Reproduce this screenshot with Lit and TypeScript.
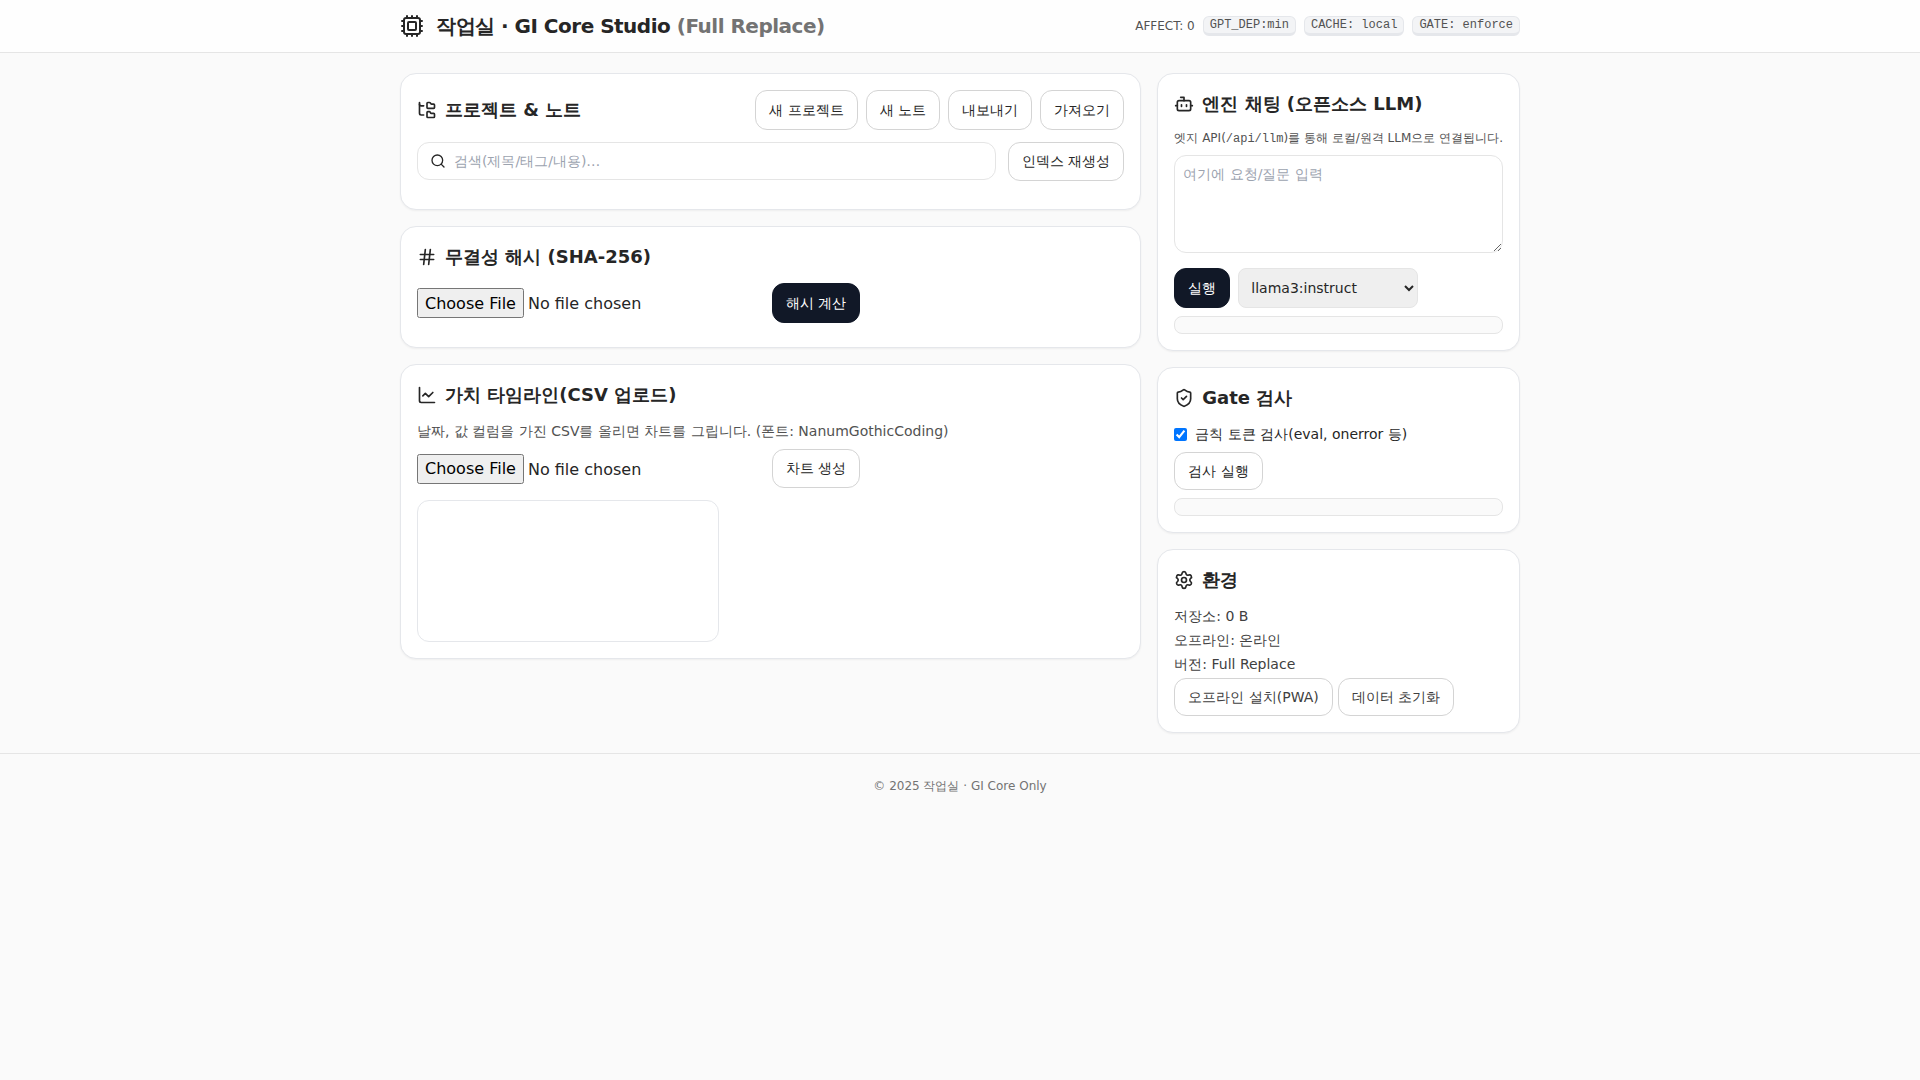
import { LitElement, html, css, svg } from "lit";
import { customElement, property } from "lit/decorators.js";

const ICONS: Record<string, unknown> = {
  cpu: svg`<rect width="16" height="16" x="4" y="4" rx="2"/><rect width="8" height="8" x="8" y="8" rx="1"/><path d="M12 20v2M12 2v2M17 20v2M17 2v2M2 12h2M2 17h2M2 7h2M20 12h2M20 17h2M20 7h2M7 20v2M7 2v2"/>`,
  tree: svg`<path d="M20 10a1 1 0 0 0 1-1V6a1 1 0 0 0-1-1h-2.500a1 1 0 0 1-.800-.400l-.900-1.200A1 1 0 0 0 15 3h-2a1 1 0 0 0-1 1v5a1 1 0 0 0 1 1Z"/><path d="M20 21a1 1 0 0 0 1-1v-3a1 1 0 0 0-1-1h-2.900a1 1 0 0 1-.880-.550l-.420-.850a1 1 0 0 0-.920-.600H13a1 1 0 0 0-1 1v5a1 1 0 0 0 1 1Z"/><path d="M3 5a2 2 0 0 0 2 2h3"/><path d="M3 3v13a2 2 0 0 0 2 2h3"/>`,
  search: svg`<circle cx="11" cy="11" r="8"/><path d="m21 21-4.300-4.300"/>`,
  hash: svg`<path d="M4 9h16M4 15h16M10 3 8 21M16 3l-2 18"/>`,
  chart: svg`<path d="M3 3v16a2 2 0 0 0 2 2h16"/><path d="m19 9-5 5-4-4-3 3"/>`,
  bot: svg`<path d="M12 8V4H8"/><rect width="16" height="12" x="4" y="8" rx="2"/><path d="M2 14h2M20 14h2M15 13v2M9 13v2"/>`,
  shield: svg`<path d="M20 13c0 5-3.500 7.500-7.660 8.950a1 1 0 0 1-.670-.010C7.500 20.500 4 18 4 13V6a1 1 0 0 1 1-1c2 0 4.500-1.200 6.240-2.720a1.170 1.170 0 0 1 1.520 0C14.510 3.810 17 5 19 5a1 1 0 0 1 1 1z"/><path d="m9 12 2 2 4-4"/>`,
  settings: svg`<path d="M9.671 4.136a2.340 2.340 0 0 1 4.659 0 2.340 2.340 0 0 0 3.319 1.915 2.340 2.340 0 0 1 2.330 4.033 2.340 2.340 0 0 0 0 3.831 2.340 2.340 0 0 1-2.330 4.033 2.340 2.340 0 0 0-3.319 1.915 2.340 2.340 0 0 1-4.659 0 2.340 2.340 0 0 0-3.320-1.915 2.340 2.340 0 0 1-2.330-4.033 2.340 2.340 0 0 0 0-3.831A2.340 2.340 0 0 1 6.350 6.051a2.340 2.340 0 0 0 3.319-1.915"/><circle cx="12" cy="12" r="3"/>`,
};

@customElement("line-icon")
export class LineIcon extends LitElement {
  @property() name = "cpu";
  @property({ type: Number }) size = 20;

  static styles = css`
    :host { display: block; flex: none; }
    .glyph { display: block; fill: none; stroke: currentColor; stroke-width: 2; stroke-linecap: round; stroke-linejoin: round; }
  `;

  render() {
    return html`<svg class="glyph" width=${this.size} height=${this.size} viewBox="0 0 24 24" aria-hidden="true">${ICONS[this.name]}</svg>`;
  }
}

@customElement("app-root")
export class AppRoot extends LitElement {
  static styles = css`
    :host {
      display: block;
      min-height: 100vh;
      background: #fafafa;
      color: #262626;
      font-family: "DejaVu Sans", sans-serif;
      font-size: 16px;
      line-height: 24px;
    }
    *, *::before, *::after, ::file-selector-button { box-sizing: border-box; }
    h1, h2, p, ul { margin: 0; padding: 0; }
    ul { list-style: none; }
    button, input, select, textarea, ::file-selector-button { font-family: inherit; font-size: inherit; line-height: inherit; }
    button, input, select, textarea { color: inherit; margin: 0; }
    ::file-selector-button { height: 30px; }

    .top { background: #fefefe; border-bottom: 1px solid #e5e5e5; }
    .wrap { max-width: 1152px; margin: 0 auto; padding: 0 16px; }
    .bar { display: flex; align-items: center; justify-content: space-between; padding-top: 12px; padding-bottom: 12px; }
    .brand { display: flex; align-items: center; gap: 12px; }
    .title { font-size: 20px; line-height: 28px; font-weight: 600; letter-spacing: -0.5px; }
    .muted { color: #737373; }
    .status { display: flex; align-items: center; gap: 8px; font-size: 12px; line-height: 16px; color: #525252; }
    .kbd {
      font-family: "Liberation Mono", monospace;
      font-size: 12px;
      line-height: 16px;
      padding: 0 6px;
      background: #f3f4f6;
      border: 1px solid #e5e7eb;
      border-bottom-width: 3px;
      border-radius: 6px;
    }

    .main { display: grid; grid-template-columns: repeat(3, minmax(0, 1fr)); gap: 16px; padding-top: 20px; padding-bottom: 20px; align-items: start; }
    .left { grid-column: span 2; }
    .stack { display: flex; flex-direction: column; gap: 16px; }
    .card { background: #ffffff; border: 1px solid #e5e7eb; border-radius: 16px; padding: 16px; box-shadow: 0 1px 2px rgba(0, 0, 0, 0.05); }
    .heading { display: flex; align-items: center; gap: 8px; font-size: 18px; line-height: 28px; font-weight: 600; }
    .split { display: flex; align-items: center; justify-content: space-between; }
    .row { display: flex; align-items: center; gap: 8px; }
    .spaced { margin-top: 12px; }
    .near { margin-top: 8px; }

    .btn {
      padding: 8px 13px;
      font-size: 14px;
      line-height: 21px;
      background: #ffffff;
      border: 1px solid #d4d4d4;
      border-radius: 12px;
    }
    .tall .btn { min-height: 40px; }
    .small .btn { line-height: 20px; }
    .btn.primary { background: #111827; border-color: #111827; color: #ffffff; min-height: 40px; }

    .search-row { display: flex; align-items: flex-start; gap: 12px; }
    .search { flex: 1; display: flex; align-items: center; gap: 8px; height: 38px; padding: 0 12px; border: 1px solid #e5e5e5; border-radius: 12px; }
    .search-input { flex: 1; min-width: 0; border: 0; padding: 0; background: transparent; font-size: 14px; line-height: 20px; outline: none; }
    ::placeholder { color: #9ca3af; opacity: 1; }
    .notes { margin-top: 12px; }
    .hash-out { margin-top: 8px; }

    .desc { font-size: 14px; line-height: 20px; color: #525252; }
    .hint { font-size: 12px; line-height: 16px; color: #525252; }
    .mono { font-family: "Liberation Mono", monospace; }
    .canvas { display: block; border: 1px solid #e5e7eb; border-radius: 12px; }

    .prompt { display: block; width: 100%; height: 98px; padding: 8px; border: 1px solid #e5e5e5; border-radius: 12px; font-size: 14px; line-height: 20px; background: #ffffff; resize: vertical; }
    .run-row { margin-top: 15px; }
    .model { width: 180px; height: 40px; padding: 8px; font-size: 14px; line-height: 20px; background: #efefef; border: 1px solid #e5e5e5; border-radius: 8px; }
    .output { height: 18px; background: #fafafa; border: 1px solid #e5e5e5; border-radius: 8px; }
    .small { font-size: 14px; line-height: 20px; }
    .check { width: 13px; height: 13px; }
    .env { display: flex; flex-direction: column; gap: 4px; color: #404040; }
    .env .row { gap: 5px; }

    .foot { border-top: 1px solid #e5e5e5; padding: 24px 16px; text-align: center; font-size: 12px; line-height: 16px; color: #737373; }
  `;

  render() {
    return html`
      <header class="top">
        <div class="wrap bar">
          <div class="brand">
            <line-icon name="cpu" .size=${24}></line-icon>
            <h1 class="title">작업실 · GI Core Studio <span class="muted">(Full Replace)</span></h1>
          </div>
          <div class="status">
            <span>AFFECT: 0</span>
            <kbd class="kbd">GPT_DEP:min</kbd>
            <kbd class="kbd">CACHE: local</kbd>
            <kbd class="kbd">GATE: enforce</kbd>
          </div>
        </div>
      </header>

      <main class="wrap main">
        <div class="left stack">
          <section class="card">
            <div class="split">
              <h2 class="heading"><line-icon name="tree"></line-icon>프로젝트 &amp; 노트</h2>
              <div class="row tall">
                <button class="btn" type="button">새 프로젝트</button>
                <button class="btn" type="button">새 노트</button>
                <button class="btn" type="button">내보내기</button>
                <button class="btn" type="button">가져오기</button>
              </div>
            </div>
            <div class="search-row spaced">
              <label class="search">
                <line-icon name="search" .size=${16}></line-icon>
                <input class="search-input" type="text" aria-label="검색" placeholder="검색(제목/태그/내용)…" />
              </label>
              <button class="btn" type="button">인덱스 재생성</button>
            </div>
            <ul class="notes"></ul>
          </section>

          <section class="card">
            <h2 class="heading"><line-icon name="hash"></line-icon>무결성 해시 (SHA-256)</h2>
            <div class="row spaced">
              <input type="file" aria-label="해시 파일" />
              <button class="btn primary" type="button">해시 계산</button>
            </div>
            <div class="hash-out"></div>
          </section>

          <section class="card">
            <h2 class="heading"><line-icon name="chart"></line-icon>가치 타임라인(CSV 업로드)</h2>
            <p class="desc spaced">날짜, 값 컬럼을 가진 CSV를 올리면 차트를 그립니다. (폰트: NanumGothicCoding)</p>
            <div class="row near">
              <input type="file" accept=".csv" aria-label="CSV 파일" />
              <button class="btn" type="button">차트 생성</button>
            </div>
            <canvas class="canvas spaced" width="300" height="140"></canvas>
          </section>
        </div>

        <div class="stack">
          <section class="card">
            <h2 class="heading"><line-icon name="bot"></line-icon>엔진 채팅 (오픈소스 LLM)</h2>
            <p class="hint spaced">엣지 API(<code class="mono">/api/llm</code>)를 통해 로컬/원격 LLM으로 연결됩니다.</p>
            <textarea class="prompt near" aria-label="요청" placeholder="여기에 요청/질문 입력"></textarea>
            <div class="row run-row">
              <button class="btn primary" type="button">실행</button>
              <select class="model" aria-label="모델"><option>llama3:instruct</option></select>
            </div>
            <div class="output near"></div>
          </section>

          <section class="card">
            <h2 class="heading"><line-icon name="shield"></line-icon>Gate 검사</h2>
            <div class="small spaced">
              <label class="row"><input class="check" type="checkbox" checked />금칙 토큰 검사(eval, onerror 등)</label>
              <button class="btn near" type="button">검사 실행</button>
            </div>
            <div class="output near"></div>
          </section>

          <section class="card">
            <h2 class="heading"><line-icon name="settings"></line-icon>환경</h2>
            <div class="small env spaced">
              <p>저장소: 0 B</p>
              <p>오프라인: 온라인</p>
              <p>버전: Full Replace</p>
              <div class="row">
                <button class="btn" type="button">오프라인 설치(PWA)</button>
                <button class="btn" type="button">데이터 초기화</button>
              </div>
            </div>
          </section>
        </div>
      </main>

      <footer class="foot">© 2025 작업실 · GI Core Only</footer>
    `;
  }
}
